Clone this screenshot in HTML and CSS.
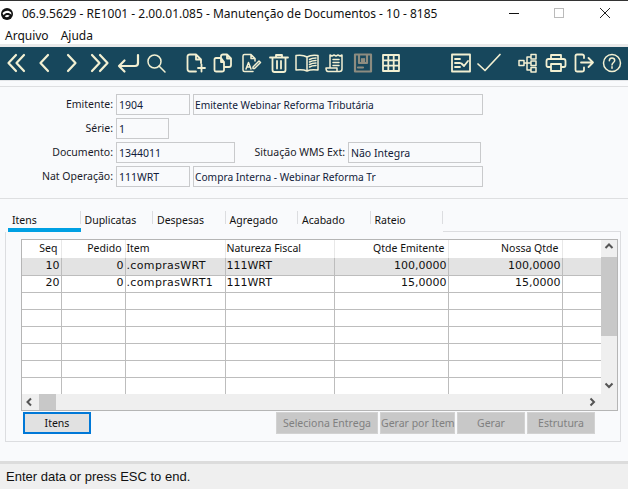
FILE: index.html
```html
<!DOCTYPE html>
<html lang="pt">
<head>
<meta charset="utf-8">
<title>Manutenção de Documentos</title>
<link rel="stylesheet" href="styles.css">
</head>
<body>
<div class="window">
  <header class="titlebar">
    <svg class="logo" viewBox="0 0 16 16" width="12" height="12"><circle cx="8" cy="8" r="8" fill="#111"/><path d="M2 7C4.500 3 10.500 2.500 13.500 6L14 9C11 6 6 6 3.500 9.500Z" fill="#fff"/><path d="M5 11C7 9 9.500 9 11.500 10C10 12.500 7 13 5 11Z" fill="#fff"/></svg>
    <span class="title">06.9.5629 - RE1001 - 2.00.01.085 - Manutenção de Documentos - 10 - 8185</span>
    <div class="winctl">
      <svg width="46" height="18" viewBox="0 0 46 18"><path d="M19 9.500H29" stroke="#111" fill="none"/></svg>
      <svg width="46" height="18" viewBox="0 0 46 18"><rect x="18.500" y="4.500" width="9" height="9" stroke="#bbb" fill="none"/></svg>
      <svg width="46" height="18" viewBox="0 0 46 18"><path d="M18 4L28 14M28 4L18 14" stroke="#222" fill="none"/></svg>
    </div>
  </header>
  <nav class="menubar"><span>Arquivo</span><span>Ajuda</span></nav>
  <div class="toolbar">
    <div class="tgroup g1">
      <button class="tb"><svg viewBox="0 0 20 20"><path d="M10 2L2.500 10L10 18M18 2L10.500 10L18 18"/></svg></button>
      <button class="tb"><svg viewBox="0 0 20 20"><path d="M14 2L6.500 10L14 18"/></svg></button>
      <button class="tb"><svg viewBox="0 0 20 20"><path d="M6 2L13.500 10L6 18"/></svg></button>
      <button class="tb"><svg viewBox="0 0 20 20"><path d="M2 2L9.500 10L2 18M10 2L17.500 10L10 18"/></svg></button>
      <button class="tb"><svg viewBox="0 0 20 20"><path d="M20 2V10Q20 13 17 13H1M6.500 7.500L1 13L6.500 18.500"/></svg></button>
      <button class="tb"><svg viewBox="0 0 20 20" class="thin"><circle cx="8.500" cy="8.500" r="6.500"/><path d="M13 13L19 19"/></svg></button>
    </div>
    <div class="tgroup g2">
      <button class="tb"><svg viewBox="0 0 20 20" class="mid"><path d="M11 18.500H5Q2.500 18.500 2.500 16V3.500Q2.500 1.500 5 1.500H11L16 6.500V10M11 1.500V6.500H16M13 15H20M16.500 11.500V18.500"/></svg></button>
      <button class="tb"><svg viewBox="0 0 20 20" class="mid"><path d="M8 5H3Q1.500 5 1.500 6.500V17Q1.500 18.500 3 18.500H9Q11 18.500 11 17V9ZM8 5V9H11M8 5V3Q8 1.500 10 1.500H14L18 5.500V12Q18 14 16 14H11M14 1.500V5.500H18"/></svg></button>
      <button class="tb"><svg viewBox="0 0 20 20" class="thin"><path d="M12 18.500H3.500Q2 18.500 2 17V3Q2 1.500 3.500 1.500H10L14 5.500V8M10 1.500V5.500H14M5 16L7.500 9.500L10 16M6 14H9M12 14L18 8L19.500 9.500L13.500 15.500H12Z"/></svg></button>
      <button class="tb"><svg viewBox="0 0 20 20" class="mid"><path d="M1 4.500H19M7 4.500V2H13V4.500M3.500 4.500V17Q3.500 19 5.500 19H14.500Q16.500 19 16.500 17V4.500M8 8V15.500M12 8V15.500"/></svg></button>
      <button class="tb wide"><svg viewBox="0 0 24 20" class="thin"><path d="M12 4Q8 1.500 1 2.500V17Q8 16 12 18Q16 16 23 17V2.500Q16 1.500 12 4ZM12 4V18M14.500 6.500Q17 5 21 5M14.500 9Q17 7.500 21 7.500M14.500 11.500Q17 10 21 10M14.500 14Q17 12.500 21 12.500"/></svg></button>
      <button class="tb"><svg viewBox="0 0 20 20" class="thin"><path d="M5 15V2L7 3L9 2L11 3L13 2L15 3L17 2V16Q17 18.500 14.500 18.500H3Q1 18.500 1 15H12V18M8 6.500H14M8 9.500H14M8 12.500H14"/></svg></button>
      <button class="tb off"><svg viewBox="0 0 20 20"><path d="M2 1.500H18V18.500H2ZM6 1.500V10H14V1.500M9 10V6L10 7L11 6V10M5 14.500H10"/></svg></button>
      <button class="tb"><svg viewBox="0 0 20 20"><path class="fillgrid" d="M2 2H18V18H2ZM7.300 2V18M12.700 2V18M2 7.300H18M2 12.700H18"/></svg></button>
    </div>
    <div class="tgroup g3">
      <button class="tb"><svg viewBox="0 0 20 20" class="mid"><path d="M1 1.500H19V18.500H1ZM4 6H9M4 10H9M4 14H9M10.500 10.500L13 13L17 8"/></svg></button>
      <button class="tb"><svg viewBox="0 0 24 20" class="check"><path d="M1 11L8 17.500L23 1.500"/></svg></button>
    </div>
    <div class="tgroup g4">
      <button class="tb"><svg viewBox="0 0 20 20" class="thin"><path d="M1 7.500H6V12.500H1ZM13 1.500H18V6H13ZM13 8H18V12.500H13ZM13 14.500H18V19H13ZM6 10H13M9 4V17M9 4H13M9 17H13"/></svg></button>
      <button class="tb"><svg viewBox="0 0 20 20" class="mid"><path d="M5 6V2H15V6M5 14H2Q.5 14 .5 12V8Q.5 6 2.500 6H17.500Q19.500 6 19.500 8V12Q19.500 14 18 14H15M5 11H15V18H5Z"/></svg></button>
      <button class="tb"><svg viewBox="0 0 20 20" class="mid"><path d="M10 5V3Q10 1.500 8 1.500H3Q1.500 1.500 1.500 3V17Q1.500 18.500 3 18.500H8Q10 18.500 10 17V14.500M7 9.500H19M14.500 5L19 9.500L14.500 14"/></svg></button>
      <button class="tb"><svg viewBox="0 0 20 20" class="thin"><circle cx="10" cy="10" r="8.500"/><path d="M7.300 7.800Q7.500 5 10 5Q12.700 5 12.700 7.500C12.700 9.500 10 9.500 10 12M10 13.800V15.300"/></svg></button>
    </div>
  </div>

  <section class="form">
    <div class="row">
      <label class="lbl">Emitente:</label><div class="fld w-74">1904</div><div class="fld desc">Emitente Webinar Reforma Tributária</div>
    </div>
    <div class="row">
      <label class="lbl">Série:</label><div class="fld w-53">1</div>
    </div>
    <div class="row">
      <label class="lbl">Documento:</label><div class="fld w-119">1344011</div>
      <label class="lbl lbl-wms">Situação WMS Ext:</label><div class="fld w-133">Não Integra</div>
    </div>
    <div class="row">
      <label class="lbl">Nat Operação:</label><div class="fld w-74">111WRT</div><div class="fld desc">Compra Interna - Webinar Reforma Tr</div>
    </div>
  </section>

  <section class="tabs">
    <div class="tabstrip">
      <span class="tab active">Itens</span><span class="tab">Duplicatas</span><span class="tab">Despesas</span><span class="tab">Agregado</span><span class="tab">Acabado</span><span class="tab">Rateio</span><span class="tabfill"></span>
    </div>
    <div class="pane">
      <div class="grid">
        <div class="tablewrap">
          <table>
            <colgroup><col class="c1"><col class="c2"><col class="c3"><col class="c4"><col class="c5"><col class="c6"><col class="c7"></colgroup>
            <thead><tr><th class="r">Seq</th><th class="r">Pedido</th><th>Item</th><th>Natureza Fiscal</th><th class="r">Qtde Emitente</th><th class="r">Nossa Qtde</th><th></th></tr></thead>
            <tbody>
              <tr class="sel"><td class="r">10</td><td class="r">0</td><td class="item">.comprasWRT</td><td>111WRT</td><td class="r">100,0000</td><td class="r">100,0000</td><td></td></tr>
              <tr><td class="r">20</td><td class="r">0</td><td class="item">.comprasWRT1</td><td>111WRT</td><td class="r">15,0000</td><td class="r">15,0000</td><td></td></tr>
              <tr><td></td><td></td><td></td><td></td><td></td><td></td><td></td></tr>
              <tr><td></td><td></td><td></td><td></td><td></td><td></td><td></td></tr>
              <tr><td></td><td></td><td></td><td></td><td></td><td></td><td></td></tr>
              <tr><td></td><td></td><td></td><td></td><td></td><td></td><td></td></tr>
              <tr><td></td><td></td><td></td><td></td><td></td><td></td><td></td></tr>
              <tr class="last"><td></td><td></td><td></td><td></td><td></td><td></td><td></td></tr>
            </tbody>
          </table>
        </div>
        <div class="vscroll">
          <svg class="arrow" width="16" height="12" viewBox="0 0 16 12"><path d="M4.500 8L8 4.500L11.500 8"/></svg>
          <div class="vthumb"></div>
          <svg class="arrow down" width="16" height="12" viewBox="0 0 16 12"><path d="M4.500 4.500L8 8L11.500 4.500"/></svg>
        </div>
        <div class="hscroll">
          <svg class="arrow" width="14" height="16" viewBox="0 0 14 16"><path d="M9 4.500L5.500 8L9 11.500"/></svg>
          <div class="hthumb"></div>
          <svg class="arrow right" width="14" height="16" viewBox="0 0 14 16"><path d="M5.500 4.500L9 8L5.500 11.500"/></svg>
        </div>
      </div>
      <div class="actions">
        <button class="btn focus">Itens</button>
        <button class="btn dis w102">Seleciona Entrega</button>
        <button class="btn dis w75">Gerar por Item</button>
        <button class="btn dis w68">Gerar</button>
        <button class="btn dis w68">Estrutura</button>
      </div>
    </div>
  </section>
  <footer class="status">Enter data or press ESC to end.</footer>
</div>
</body>
</html>
```
FILE: styles.css
```css
* { box-sizing: border-box; }
html, body { margin: 0; padding: 0; }
body { width: 628px; height: 489px; overflow: hidden; background: #f9fafc; font-family: "Noto Sans", sans-serif; color: #111; }
.window { display: flex; flex-direction: column; width: 628px; height: 489px; border-top: 1px solid #333; }

.titlebar { display: flex; align-items: center; height: 25px; background: #fff; padding-left: 1px; flex: none; }
.logo { flex: none; margin-top: 1px; }
.title { margin-left: 9px; font-size: 12px; line-height: 25px; white-space: nowrap; color: #111; }
.winctl { display: flex; margin-left: auto; margin-bottom: 2px; }
.winctl svg { display: block; }

.menubar { display: flex; gap: 12px; height: 18px; padding-left: 5px; background: #fff; font-size: 12px; line-height: 19px; flex: none; }

.toolbar { display: flex; height: 37px; background: #17475c; border-top: 3px solid #e9e9e9; border-bottom: 1px solid #e3e5e8; flex: none; padding: 0 0 2px 2px; align-items: center; }
.tgroup { display: flex; }
.g2 { margin-left: 11px; }
.g3 { margin-left: 42px; }
.g4 { margin-left: 11px; }
.tb { width: 28px; height: 28px; padding: 0; border: 0; background: none; display: flex; align-items: center; justify-content: center; }
.tb svg { width: 20px; height: 20px; fill: none; stroke: #f3f0d2; stroke-width: 2.200; stroke-linecap: round; stroke-linejoin: round; overflow: visible; }
.tb svg.mid { stroke-width: 1.800; }
.tb svg.thin { stroke-width: 1.500; }
.tb.wide svg { width: 24px; }
.tb svg.check { width: 24px; stroke-width: 1.700; }
.tb.off svg { stroke: #8d8c80; }
.fillgrid { stroke-width: 1.800; }

.form { margin-top: 5px; height: 113px; border-top: 1px solid #dedfe1; border-bottom: 1px solid #dedfe1; padding-top: 7px; display: flex; flex-direction: column; gap: 3px; flex: none; background: #f9fafc; }
.row { display: flex; height: 21px; align-items: center; }
.lbl { width: 113px; flex: none; text-align: right; font-size: 10.500px; line-height: 18px; padding-bottom: 2px; color: #1a1a2a; white-space: nowrap; }
.lbl-wms { width: 110px; }
.fld { height: 21px; margin-left: 3px; border: 1px solid #c9cacc; background: #f9fafc; font-size: 10.500px; line-height: 20px; padding-left: 2px; color: #111b3a; white-space: nowrap; overflow: hidden; flex: none; }
.w-74 { width: 74px; }
.w-53 { width: 53px; }
.w-119 { width: 119px; }
.w-133 { width: 133px; }
.desc { width: 290px; padding-left: 1px; font-size: 10.200px; }

.tabs { margin-top: 12px; flex: none; }
.tabstrip { display: flex; height: 21px; width: 621px; padding-left: 8px; }
.tab { width: 72.500px; height: 21px; padding-left: 4px; font-size: 10.500px; line-height: 19px; background: linear-gradient(#dcdde0, #dcdde0) right top / 1px 13px no-repeat; color: #111; }
.tab.active { border-bottom: 4px solid #00a0e3; }
.tabfill { flex: 1; border-bottom: 1px solid #dcdde0; }
.pane { margin-left: 5px; width: 616px; height: 210px; border: 1px solid #dcdde0; border-top: 0; padding: 7px 2px 0 15px; }

.grid { display: grid; grid-template-columns: 1fr 16px; grid-template-rows: 154px 16px; width: 597px; height: 172px; border: 1px solid #b5b5b5; background: #efefef; }
.tablewrap { overflow: hidden; background: #fff; }
table { border-collapse: collapse; table-layout: fixed; width: 579px; font-family: "DejaVu Sans", sans-serif; font-size: 11px; color: #111; }
.c1 { width: 39px; }
.c2 { width: 64px; }
.c3 { width: 100px; }
.c4 { width: 109px; }
.c5 { width: 114px; }
.c6 { width: 114px; }
.c7 { width: 39px; }
th { height: 18px; padding: 0 2px 2px 1px; font-family: "Noto Sans", sans-serif; font-size: 10.500px; font-weight: 400; text-align: left; background: #fff; border-right: 1px solid #e8e8e8; white-space: nowrap; line-height: 14px; }
th.r { text-align: right; padding-right: 3px; }
td { height: 17px; padding: 0 1px 1px 1px; border-right: 1px solid #bdbdbd; border-bottom: 1px solid #bdbdbd; white-space: nowrap; line-height: 14px; }
th:last-child, td:last-child { border-right: 0; }
td.r { text-align: right; }
td.item { letter-spacing: .35px; padding-left: 1px; }
.sel td { background: #e3e3e3; }
.last td { border-bottom: 0; }

.vscroll { background: #efefef; display: flex; flex-direction: column; align-items: center; }
.vthumb { width: 16px; height: 79px; background: #c8c8c8; margin-top: 5px; }
.hscroll { grid-column: 1 / span 2; display: flex; align-items: center; background: #efefef; height: 16px; }
.hthumb { width: 17px; height: 16px; background: #c8c8c8; margin-left: 3px; }
.arrow { flex: none; }
.arrow path { fill: none; stroke: #555; stroke-width: 2; }
.arrow.down { margin-top: auto; margin-bottom: 3px; }
.arrow.right { margin-left: auto; margin-right: 18px; }

.actions { display: flex; gap: 2px; margin-top: 1px; padding-left: 2px; }
.btn { height: 22px; font-family: "Noto Sans", sans-serif; font-size: 10.500px; padding: 0; background: #c8c8c8; border: 1px solid #bfbfbf; white-space: nowrap; }
.focus { width: 68px; background: #e1e1e1; border: 2px solid #0078d7; color: #111; margin-right: 183px; }
.dis { color: #808080; border-color: #d2d2d2; }
.w102 { width: 102px; }
.w75 { width: 75px; }
.w68 { width: 68px; }

.status { margin-top: auto; height: 28px; background: #efefef; border-top: 3px solid #dcdcdc; font-family: "Liberation Sans", sans-serif; font-size: 13px; line-height: 25px; padding-left: 6px; color: #111; flex: none; }
```
